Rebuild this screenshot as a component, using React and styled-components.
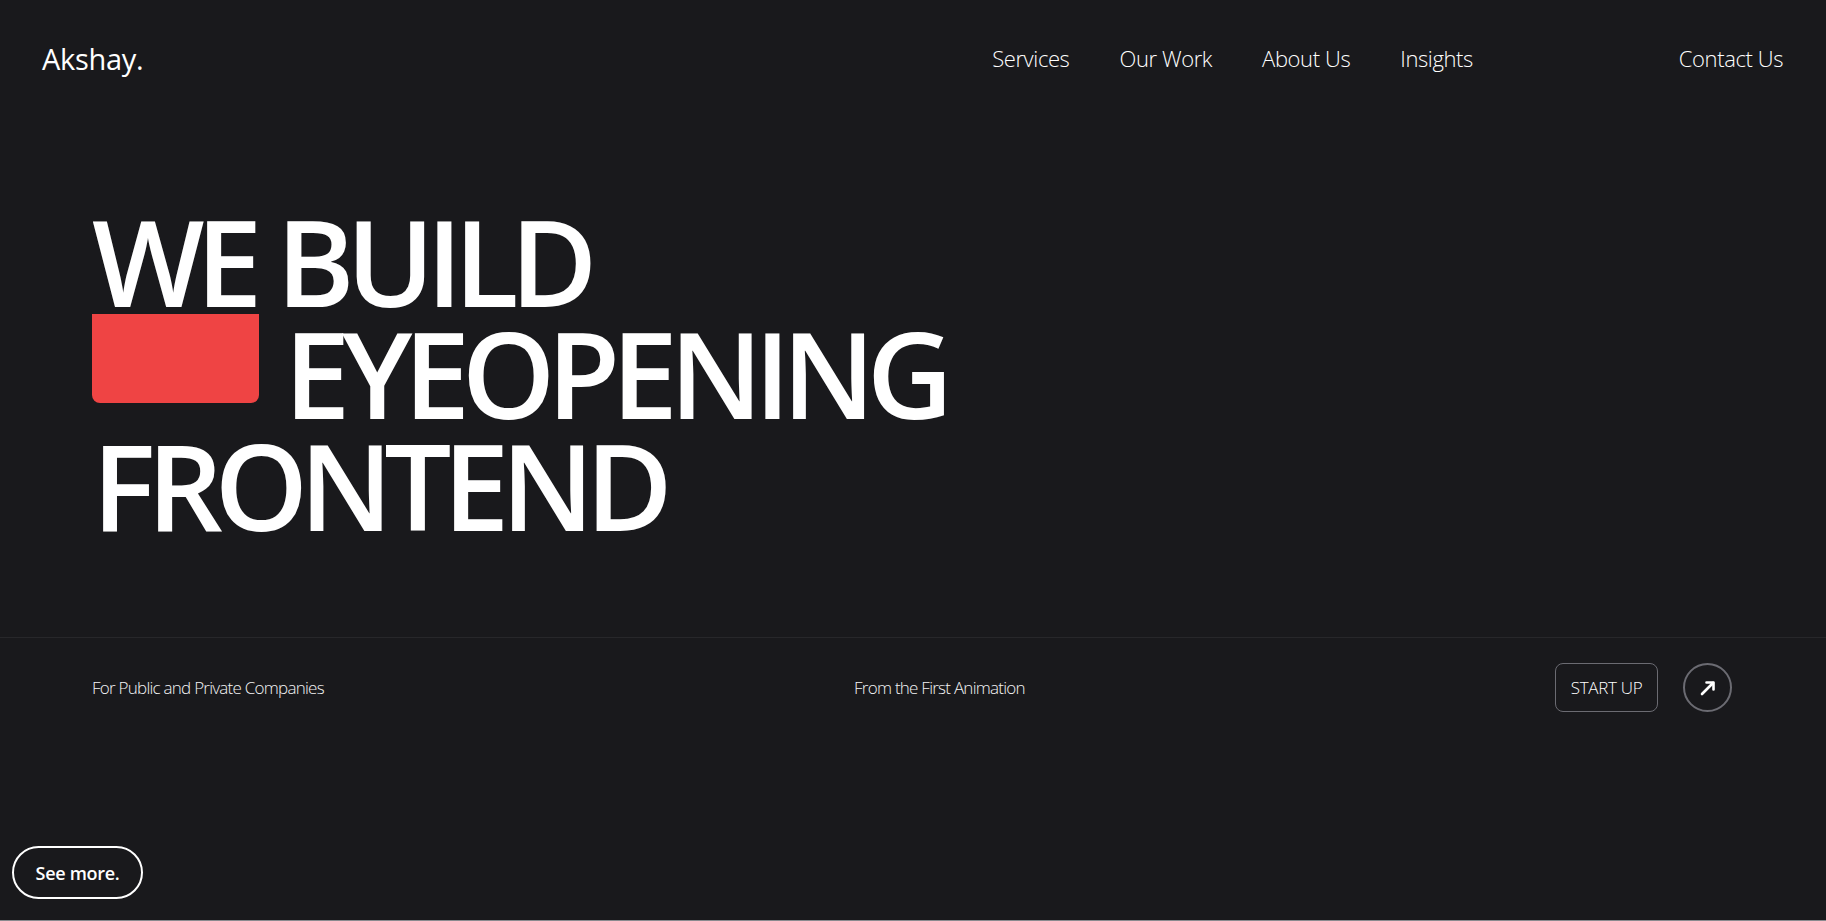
import React from 'react';
import styled, { createGlobalStyle } from 'styled-components';

const GlobalStyle = createGlobalStyle`
  * { box-sizing: border-box; }
  html, body {
    margin: 0;
    padding: 0;
    background: #19191c;
    color: #fff;
    font-family: "Open Sans", "Noto Sans", sans-serif;
  }
`;

const navLinks = ['Services', 'Our Work', 'About Us', 'Insights'];

const App = () => (
  <>
    <GlobalStyle />
    <Hero>
      <Header>
        <Logo>Akshay.</Logo>
        <Nav>
          {navLinks.map((label) => (
            <NavLink key={label}>{label}</NavLink>
          ))}
        </Nav>
        <NavLink>Contact Us</NavLink>
      </Header>

      <Headline>
        <Line>WE BUILD</Line>
        <Line>
          <RedBlock />
          EYEOPENING
        </Line>
        <Line>FRONTEND</Line>
      </Headline>

      <InfoRow>
        <Caption>For Public and Private Companies</Caption>
        <Caption>From the First Animation</Caption>
        <Actions>
          <StartButton>START UP</StartButton>
          <CircleButton aria-label="Go">
            <svg width="18" height="18" viewBox="0 0 18 18" fill="none">
              <path d="M3 15 L14 4" stroke="#fff" strokeWidth="2.6" strokeLinecap="round" />
              <path d="M7.5 3.5 H14.5 V10.5" stroke="#fff" strokeWidth="2.6" strokeLinecap="round" strokeLinejoin="round" />
            </svg>
          </CircleButton>
        </Actions>
      </InfoRow>
    </Hero>
    <NextSection />
    <SeeMore>See more.</SeeMore>
  </>
);

export default App;

const Hero = styled.section`
  min-height: 920px;
  display: flex;
  flex-direction: column;
`;

const Header = styled.header`
  height: 116px;
  padding: 0 43px 0 42px;
  display: flex;
  align-items: center;
`;

const Logo = styled.div`
  font-size: 29px;
  font-weight: 400;
  letter-spacing: -0.3px;
  flex: 1;
`;

const Nav = styled.nav`
  display: flex;
  gap: 50px;
  margin-right: 206px;
`;

const NavLink = styled.a`
  font-size: 22px;
  font-weight: 300;
  letter-spacing: -0.4px;
  color: #fff;
  cursor: pointer;
`;

const Headline = styled.h1`
  margin: 89px 0 0;
  padding-left: 92px;
  font-size: 119px;
  font-weight: 600;
  line-height: 112px;
  letter-spacing: -8.5px;
`;

const Line = styled.div`
  display: flex;
  align-items: flex-start;
  white-space: nowrap;
`;

const RedBlock = styled.span`
  display: block;
  width: 167px;
  height: 89px;
  margin-top: -3px;
  margin-right: 25px;
  background: #ef4444;
  border-radius: 0 0 8px 8px;
`;

const InfoRow = styled.div`
  margin-top: 96px;
  border-top: 1px solid #27272a;
  padding: 25px 94px 0 92px;
  display: flex;
  align-items: center;
  justify-content: space-between;
`;

const Caption = styled.p`
  margin: 0;
  font-size: 17px;
  font-weight: 300;
  letter-spacing: -0.75px;
  color: #f4f4f5;
`;

const Actions = styled.div`
  display: flex;
  align-items: center;
  gap: 25px;
`;

const StartButton = styled.button`
  height: 49px;
  width: 103px;
  background: transparent;
  border: 1px solid #6b6b72;
  border-radius: 8px;
  color: #fff;
  font-family: inherit;
  font-size: 17px;
  font-weight: 300;
  letter-spacing: -0.3px;
`;

const CircleButton = styled.button`
  width: 49px;
  height: 49px;
  border-radius: 50%;
  border: 2px solid #6b6b72;
  background: transparent;
  display: flex;
  align-items: center;
  justify-content: center;
  padding: 0;
`;

const NextSection = styled.section`
  height: 200px;
  background: #8a8a8f;
`;

const SeeMore = styled.button`
  position: fixed;
  left: 12px;
  bottom: 22px;
  width: 131px;
  height: 53px;
  border: 2px solid #fff;
  border-radius: 999px;
  background: #19191c;
  color: #fff;
  font-family: inherit;
  font-size: 18px;
  font-weight: 600;
  letter-spacing: -0.3px;
`;
